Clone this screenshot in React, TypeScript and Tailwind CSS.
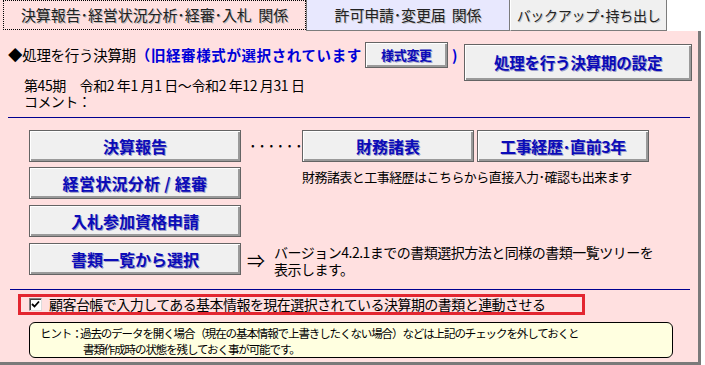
import { ReactNode } from "react";

const Btn = ({ children, className }: { children: ReactNode; className: string }) => (
  <div
    className={`flex items-center justify-center bg-[#f0f0f0] border border-[#646464] shadow-[inset_1px_1px_0_#ffffff,inset_-2px_-2px_0_#9a9a9a] font-bold text-[#0b0bb8] [text-shadow:1px_1px_0_#9c9cc8] ${className}`}
  >
    {children}
  </div>
);

const CheckBox = () => (
  <div className="w-[13px] h-[13px] bg-white border border-t-[#808080] border-l-[#808080] border-b-[#dcdcdc] border-r-[#dcdcdc] shadow-[inset_1px_1px_0_#404040] flex items-center justify-center">
    <svg width="9" height="9" viewBox="0 0 9 9">
      <path d="M1 4 L3.5 6.5 L8 1.5" stroke="#000" strokeWidth="1.8" fill="none" />
    </svg>
  </div>
);

export default function App() {
  return (
    <div className="w-[705px] h-[365px] bg-white overflow-hidden font-['Noto_Sans_CJK_JP',sans-serif] text-black">
      {/* tabs */}
      <div className="flex h-[31px]">
        <div className="w-[306px] bg-[#ffe0e0] pl-[3px]">
          <div className="h-[30px] border border-dotted border-black flex items-center justify-center text-[15px] tracking-[-0.1px] text-[#222] [text-shadow:1px_1px_0_#b8b8b8]">
            決算報告･経営状況分析･経審･入札&nbsp;&nbsp;関係
          </div>
        </div>
        <div className="w-[204px] h-[31px] bg-[#e8e8fe] border-l border-r border-b border-[#7c7c7c] flex items-center justify-center text-[15px] tracking-[-0.2px] text-[#222] [text-shadow:1px_1px_0_#c0c0c0]">
          許可申請･変更届&nbsp;&nbsp;関係
        </div>
        <div className="w-[157px] h-[31px] bg-[#f0f0f0] border-l border-l-white border-r border-b border-[#7c7c7c] flex items-center justify-center text-[14px] tracking-[-0.3px] text-[#222] [text-shadow:1px_1px_0_#c0c0c0]">
          バックアップ･持ち出し
        </div>
      </div>

      {/* panel */}
      <div className="w-[701px] h-[334px] bg-[#ffe0e0] border-r-[3px] border-b-[3px] border-[#7a7a7a] pt-[11px]">
        <div className="flex items-start">
          <div className="pl-[8px] shrink-0">
            <div className="flex items-center h-[26px] text-[14.5px] tracking-[-0.3px]">
              <span>◆処理を行う決算期</span>
              <span className="font-bold text-[#0000d8] tracking-[0.6px]">（旧経審様式が選択されています</span>
              <Btn className="ml-[3px] w-[83px] h-[26px] text-[13px] tracking-[-0.3px]">様式変更</Btn>
              <span className="ml-[4px] font-bold text-[#0000d8]">)</span>
            </div>
            <div className="pl-[16px] mt-[9px] h-[16px] leading-[16px] text-[14px] tracking-[-0.4px] whitespace-nowrap">
              第45期　令和2 年1 月1 日～令和2 年12 月31 日
            </div>
            <div className="pl-[16px] h-[16px] leading-[16px] text-[14px] tracking-[-0.6px] whitespace-nowrap">コメント：</div>
          </div>
          <Btn className="ml-[7px] mt-[2px] w-[228px] h-[37px] text-[15.5px] tracking-[-0.2px]">
            処理を行う決算期の設定
          </Btn>
        </div>

        <div className="ml-[8px] mt-[8px] w-[682px] h-px bg-[#000090]" />

        {/* main buttons */}
        <div className="mt-[12px] pl-[29px] flex flex-col">
          <div className="flex items-center h-[32px]">
            <Btn className="w-[212px] h-[32px] text-[16px]">決算報告</Btn>
            <div className="w-[61px] pl-[8px] text-[13px] tracking-[1.5px] font-bold">······</div>
            <Btn className="w-[172px] h-[32px] text-[16px]">財務諸表</Btn>
            <Btn className="ml-[3px] w-[172px] h-[32px] text-[16px] tracking-[-0.4px]">工事経歴･直前3年</Btn>
          </div>
          <div className="flex items-start mt-[5px] h-[32px]">
            <Btn className="w-[212px] h-[32px] text-[16px] tracking-[0.3px]">経営状況分析&nbsp;/&nbsp;経審</Btn>
            <div className="ml-[61px] pt-[2px] leading-[16px] text-[13px] tracking-[-0.55px]">
              財務諸表と工事経歴はこちらから直接入力･確認も出来ます
            </div>
          </div>
          <div className="flex mt-[6px]">
            <Btn className="w-[212px] h-[32px] text-[16px]">入札参加資格申請</Btn>
          </div>
          <div className="flex items-start mt-[6px]">
            <Btn className="w-[212px] h-[32px] text-[16px]">書類一覧から選択</Btn>
            <div className="w-[33px] pl-[6px] pt-[6px] text-[18px] leading-[22px]">⇒</div>
            <div className="pt-[1px] leading-[17px] text-[14px] tracking-[-0.5px]">
              <div>バージョン4.2.1までの書類選択方法と同様の書類一覧ツリーを</div>
              <div>表示します。</div>
            </div>
          </div>
        </div>

        <div className="ml-[10px] mt-[11px] w-[680px] h-px bg-[#000090]" />

        {/* link checkbox */}
        <div className="ml-[18px] mt-[4px] w-[567px] h-[21px] border-[3px] border-[#e32630] flex items-center pl-[8px]">
          <CheckBox />
          <span className="ml-[7px] text-[14px] leading-[15px] tracking-[-0.55px] whitespace-nowrap">
            顧客台帳で入力してある基本情報を現在選択されている決算期の書類と連動させる
          </span>
        </div>

        {/* hint */}
        <div className="ml-[29px] mt-[7px] w-[644px] h-[36px] bg-[#ffffe0] border border-black rounded-[6px] pl-[10px] pt-[2px] flex text-[11.5px] leading-[16px] tracking-[-1.1px]">
          <span className="w-[40px] shrink-0 whitespace-nowrap">ヒント：</span>
          <div className="whitespace-nowrap">
            <div>過去のデータを開く場合（現在の基本情報で上書きしたくない場合）などは上記のチェックを外しておくと</div>
            <div className="pl-[3px]">書類作成時の状態を残しておく事が可能です。</div>
          </div>
        </div>
      </div>
    </div>
  );
}
